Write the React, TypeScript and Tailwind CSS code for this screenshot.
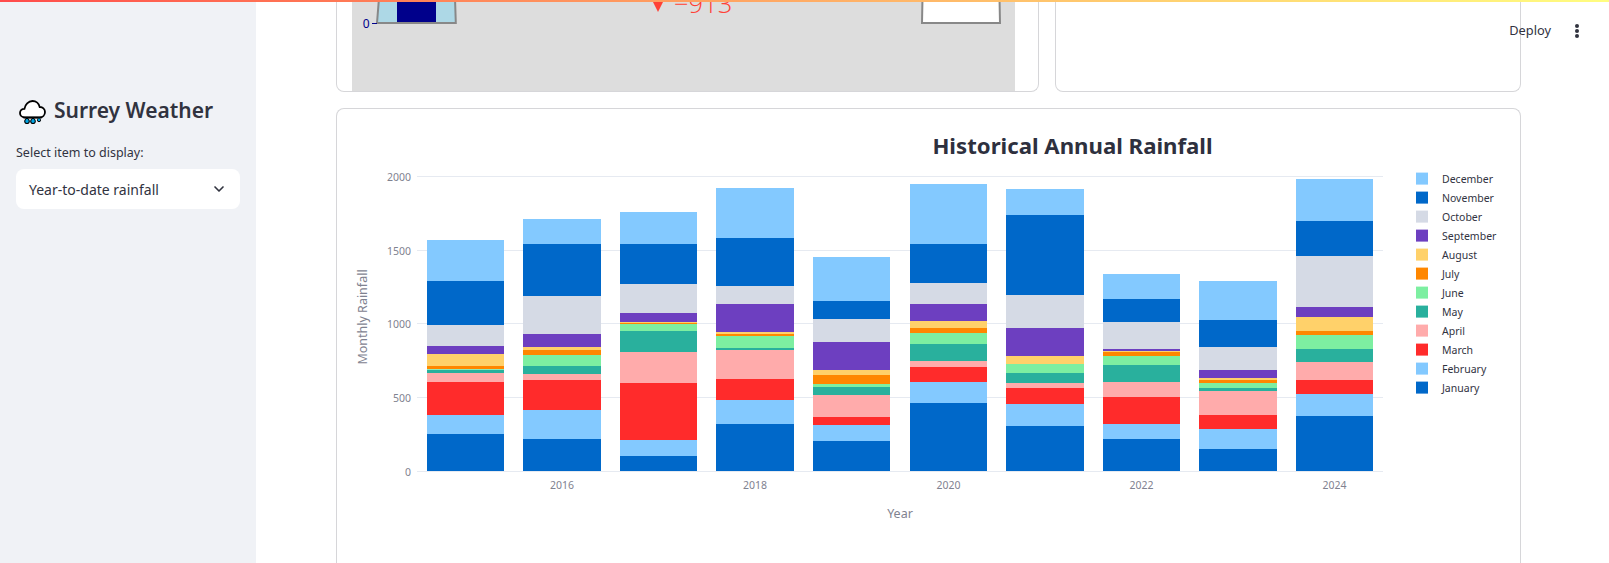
import React from "react";
import { ChevronDown } from "lucide-react";

const monthColors = ["#0068c9", "#83c9ff", "#ff2b2b", "#ffabab", "#29b09d", "#7defa1", "#ff8700", "#ffd16a", "#6d3fc0", "#d5dae5", "#0068c9", "#83c9ff"];
const months = ["December", "November", "October", "September", "August", "July", "June", "May", "April", "March", "February", "January"];
const legendColors = [...monthColors].reverse();

// stack edges bottom to top, measured at 3x from the plot top
const bars = [
  { x: 427, w: 77, edges: [903, 792, 735, 636, 609, 599, 597, 588, 552, 528, 465, 333, 210] },
  { x: 523, w: 78, edges: [903, 807, 720, 630, 612, 588, 555, 540, 531, 492, 378, 222, 147] },
  { x: 620, w: 77, edges: [903, 858, 810, 639, 546, 483, 462, 459, 456, 429, 342, 222, 126] },
  { x: 716, w: 78, edges: [903, 762, 690, 627, 540, 534, 498, 492, 486, 402, 348, 204, 54] },
  { x: 813, w: 77, edges: [903, 813, 765, 741, 675, 651, 642, 615, 600, 516, 447, 393, 261] },
  { x: 910, w: 77, edges: [903, 699, 636, 591, 573, 522, 489, 474, 453, 402, 339, 222, 42] },
  { x: 1006, w: 78, edges: [903, 768, 702, 654, 639, 609, 582, 582, 558, 474, 375, 135, 57] },
  { x: 1103, w: 77, edges: [903, 807, 762, 681, 636, 585, 558, 546, 543, 537, 456, 387, 312] },
  { x: 1199, w: 78, edges: [903, 837, 777, 735, 663, 654, 639, 630, 624, 600, 531, 450, 333] },
  { x: 1296, w: 77, edges: [903, 738, 672, 630, 576, 537, 495, 483, 441, 411, 258, 153, 27] },
];

const yTicks = [
  { label: "2000", y: 176.5 },
  { label: "1500", y: 250.5 },
  { label: "1000", y: 323.5 },
  { label: "500", y: 397.5 },
  { label: "0", y: 471.5 },
];
const xTicks = [
  { label: "2016", x: 562 },
  { label: "2018", x: 755 },
  { label: "2020", x: 948.5 },
  { label: "2022", x: 1141.5 },
  { label: "2024", x: 1334.5 },
];

const RainCloud = () => (
  <svg width="27" height="24" viewBox="0 0 27 24" className="shrink-0">
    <path d="M6 17.500C2.500 17.500 1 15 1 13c0-2.600 2-4.300 4.400-4.200C6 4.500 9.500 1 13.500 1c3.600 0 6.500 2.600 7.200 6 2.900-.2 5.300 2 5.300 5 0 3-2.300 5.500-5.500 5.500Z" fill="#fff" stroke="#000" strokeWidth="1.800" />
    <path d="M4 17.500h19" stroke="#000" strokeWidth="1.500" />
    <path d="M8 17.500c1.800 2 2.300 3 2.300 3.800a2.300 2.300 0 0 1-4.600 0c0-.8.500-1.800 2.300-3.800Z" fill="#00a5e3" stroke="#000" strokeWidth="1.100" />
    <path d="M14 17.500c1.800 2 2.300 3 2.300 3.800a2.300 2.300 0 0 1-4.600 0c0-.8.500-1.800 2.300-3.800Z" fill="#00a5e3" stroke="#000" strokeWidth="1.100" />
    <path d="M20 17.500c1.100 1.300 1.600 2 1.600 2.600a1.600 1.600 0 0 1-3.200 0c0-.6.500-1.300 1.600-2.600Z" fill="#00a5e3" stroke="#000" strokeWidth="1" />
  </svg>
);

// the two bullet gauges at the top, scrolled mostly out of view
const GaugeStrip = () => (
  <svg className="ml-[15px] bg-[#dddddd] font-['Noto_Sans',sans-serif]" width="663" height="91" viewBox="352 0 663 91">
    <path d="M379 -2L377 23H455.800L455 -2Z" fill="#add8e6" stroke="#888888" strokeWidth="2" />
    <rect x="397" y="-2" width="39" height="24" fill="#00008b" />
    <path d="M372 23.500H377" stroke="#00008b" strokeWidth="1" />
    <text x="369.500" y="28" textAnchor="end" fontSize="12" fill="#00008b">0</text>
    <path d="M653 2L663 2L658 12Z" fill="#ff4136" />
    <text x="674" y="12.500" fontSize="25.500" fontWeight="350" fill="#ff4136" className="font-['Open_Sans',sans-serif]">−913</text>
    <path d="M922.500 -2L922 23H1000L999.500 -2Z" fill="#ffffff" stroke="#888888" strokeWidth="2" />
  </svg>
);

const RainfallChart = () => (
  <svg className="font-['Noto_Sans',sans-serif]" width="1182" height="454" viewBox="337 109 1182 454">
    <text x="1072.500" y="154" textAnchor="middle" fontSize="22.200" fontWeight="700" fill="#2e303e">Historical Annual Rainfall</text>
    {yTicks.map((t) => (
      <g key={t.label}>
        <path d={`M417 ${t.y}H1383`} stroke="#e6eaf1" strokeWidth="1" />
        <text x="411" y={t.y + 4.500} textAnchor="end" fontSize="10.500" fill="#7f8290">{t.label}</text>
      </g>
    ))}
    {bars.map((b) =>
      b.edges.slice(0, -1).map((edge, i) => {
        const top = b.edges[i + 1];
        return <rect key={`${b.x}-${i}`} x={b.x} y={170 + top / 3} width={b.w} height={(edge - top) / 3} fill={monthColors[i]} />;
      })
    )}
    {xTicks.map((t) => (
      <text key={t.label} x={t.x} y="489" textAnchor="middle" fontSize="10.500" fill="#7f8290">{t.label}</text>
    ))}
    <text x="900" y="518" textAnchor="middle" fontSize="12.500" fill="#7f8290">Year</text>
    <text transform="translate(367 317) rotate(-90)" textAnchor="middle" fontSize="12.500" fill="#7f8290">Monthly Rainfall</text>
    {months.map((m, i) => (
      <g key={m}>
        <rect x="1416" y={172.6 + i * 19} width="12" height="12" fill={legendColors[i]} />
        <text x="1442" y={183 + i * 19} fontSize="10.500" fill="#31333f">{m}</text>
      </g>
    ))}
  </svg>
);

const App = () => {
  return (
    <div className="relative flex h-[563px] w-full overflow-hidden bg-white font-['Noto_Sans',sans-serif] text-[#31333f]">
      <div className="absolute left-0 right-0 top-0 z-10 h-[2px] bg-linear-to-r from-[#ff4b4b] to-[#fffd80]" />

      {/* sidebar */}
      <aside className="w-64 shrink-0 bg-[#f0f2f6] px-4 pt-[100px]">
        <div className="flex items-start pl-[3px]">
          <RainCloud />
          <h1 className="ml-[8px] text-[21px] font-semibold leading-[20px]">Surrey Weather</h1>
        </div>
        <label className="mt-[20px] block text-[12.500px] leading-[18px]">Select item to display:</label>
        <div className="mt-[7px] flex h-10 items-center justify-between rounded-lg bg-white pl-[13px] pr-[13px] text-[14px]">
          <span>Year-to-date rainfall</span>
          <ChevronDown size={16} strokeWidth={2.500} />
        </div>
      </aside>

      {/* main column */}
      <main className="flex min-w-0 flex-1 flex-col pl-20 pr-[88px]">
        <div className="flex h-[92px] gap-4">
          <div className="w-[703px] rounded-b-lg border-x border-b border-[#d6d6d9]">
            <GaugeStrip />
          </div>
          <div className="flex-1 rounded-b-lg border-x border-b border-[#d6d6d9]" />
        </div>
        <div className="mt-4 flex-1 rounded-t-lg border-x border-t border-[#d6d6d9]">
          <RainfallChart />
        </div>
      </main>

      {/* app header, sits over the page */}
      <div className="absolute right-[30px] top-[21px] flex items-center gap-[24px] text-[12.800px]">
        <span>Deploy</span>
        <span className="flex flex-col gap-[1px]">
          <span className="size-[4px] rounded-full bg-[#31333f]" />
          <span className="size-[4px] rounded-full bg-[#31333f]" />
          <span className="size-[4px] rounded-full bg-[#31333f]" />
        </span>
      </div>
    </div>
  );
};

export default App;
